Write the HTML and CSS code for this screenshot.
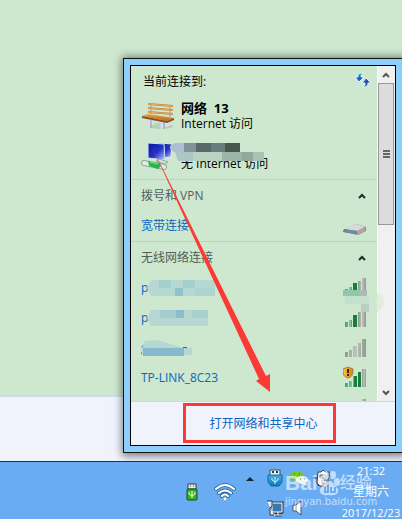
FILE: index.html
```html
<!DOCTYPE html>
<html lang="zh-CN">
<head>
<meta charset="utf-8">
<title>网络连接</title>
<link rel="stylesheet" href="styles.css">
</head>
<body>
<svg class="defs" aria-hidden="true">
  <defs>
    <linearGradient id="gn" x1="0" x2="1"><stop offset="0" stop-color="#4c9c68"/><stop offset=".5" stop-color="#8cc9a0"/><stop offset=".6" stop-color="#187c3c"/></linearGradient>
    <linearGradient id="gy" x1="0" x2="1"><stop offset="0" stop-color="#8e958f"/><stop offset=".5" stop-color="#bcc5bd"/><stop offset="1" stop-color="#929992"/></linearGradient>
    <linearGradient id="scr" x1="0" x2="1" y2="1"><stop offset="0" stop-color="#0715a2"/><stop offset=".55" stop-color="#2035c8"/><stop offset="1" stop-color="#b8ccff"/></linearGradient>
    <linearGradient id="wood" x2="0" y2="1"><stop offset="0" stop-color="#e9a34c"/><stop offset="1" stop-color="#b8691f"/></linearGradient>
    <linearGradient id="usb" x2="0" y2="1"><stop offset="0" stop-color="#48aee0"/><stop offset="1" stop-color="#0876ba"/></linearGradient>
    <linearGradient id="gold" x1="0" x2="1"><stop offset="0" stop-color="#ffc238"/><stop offset="1" stop-color="#e07c08"/></linearGradient>
  </defs>
</svg>
<main class="desktop">
  <div class="window-body"></div>
  <div class="window-footer"></div>
  <section class="flyout">
    <div class="scroll-area">
      <div class="list">
        <section class="group current">
          <header class="group-head"><h1>当前连接到:</h1>
            <button class="icon-button" aria-label="刷新"><svg width="16" height="16" viewBox="0 0 16 16"><path d="M8 1C4 1 3 3 3 5H0l4 5 5-5H6c0-2 0-3 2-4z" fill="#1667b8" stroke="#e4f4fb"/><path d="M8 15c4 0 5-2 5-4h3l-5-5-4 5h3c0 2 0 3-2 4z" fill="#2357a8" stroke="#e4f4fb"/><path d="m6 2-1 3" stroke="#32b8e8"/></svg></button>
          </header>
          <div class="network">
            <svg width="34" height="30" viewBox="0 0 34 30"><ellipse cx="20" cy="25" rx="12" ry="3" fill="#9fb7a5" opacity=".5"/><path d="M8 18v10M12 19v5M21 20v9M25 20v6M28 18v7" stroke="#d9dcea" stroke-width="3"/><path d="M10 19v8M23 20v8" stroke="#98a0ae"/><path d="M10 4v9M29 6v10" stroke="#b9bfcb" stroke-width="2"/><g stroke="#c87a30" stroke-width="2"><path d="m7 3 25 2M7 7l25 2M7 11l25 2"/></g><g stroke="#eab06a"><path d="m7 3 25 2M7 7l25 2M7 11l25 2"/></g><path d="m1 15 6-2 26 4-7 3z" fill="url(#wood)"/><path d="m1 15 25 5v2L1 17zm25 5 7-3v2l-7 3z" fill="#8c4f18"/></svg>
            <div><strong>网络 &nbsp;13</strong><span>Internet 访问</span></div>
          </div>
          <div class="network second">
            <svg width="34" height="30" viewBox="0 0 34 30"><path d="m18 2 13 1-1 13-12 1z" fill="url(#scr)" stroke="#e0e8f2"/><path d="m7 2 16 1 1 16-17-2z" fill="url(#scr)" stroke="#d7e3f2"/><path d="m18 18 9 3-3 2-9-3z" fill="#dae5e5" stroke="#8fa89a"/><path d="m3 22 20 4" stroke="#8fa89a" stroke-width="6" stroke-linecap="round"/><path d="m3 22 20 4" stroke="#dfece4" stroke-width="4" stroke-linecap="round"/><path d="m7 20 11 2 2 3-3 3-9-3z" fill="#28b54a"/><path d="m9 21 8 2" stroke="#8bed96"/></svg>
            <div><strong>&nbsp;</strong><span>无 Internet 访问</span></div>
            <svg class="blur-network" width="94" height="20" viewBox="0 0 94 20"><path d="M0 4 5 1h9v9H4L0 7z" fill="#aebfd5"/><path d="M14 1h12v9H14z" fill="#7e9298"/><path d="M26 1h15v9H26z" fill="#586869"/><path d="M41 1h14v9H41z" fill="#657e7b"/><path d="M55 1h15v9H55z" fill="#485850"/><path d="M5 10h18v9H8z" fill="#abc6c4"/><path d="M23 10h29v9H23z" fill="#b8d3c1"/><path d="M52 10h20v9H52z" fill="#9bb6a8"/><path d="M72 10h11v9H72z" fill="#8fa99d"/><path d="M83 10h11v9H83z" fill="#a9c3b0"/></svg>
          </div>
        </section>
        <section class="group">
          <header class="group-head"><h2>拨号和 VPN</h2><button class="icon-button" aria-label="折叠"><svg width="10" height="8" viewBox="0 0 10 8"><path d="m2 6 3-3 3 3" fill="none" stroke="#20282b" stroke-width="2"/></svg></button></header>
          <a class="entry dial" href="#"><span>宽带连接</span><svg width="24" height="14" viewBox="0 0 24 14"><path d="m0 7 13-6 10 3v4l-8 4-15-3z" fill="#858a8a"/><path d="m1 6 12-5 9 3-8 4z" fill="#d7dad8"/><path d="m1 6 13 2v3L1 9z" fill="#777f82"/><path d="m4 7 8 1v2L4 9z" fill="#4d9dc2"/><path d="m14 8 8-4v4l-8 4z" fill="#b0a6a5"/></svg></a>
        </section>
        <section class="group wireless">
          <header class="group-head"><h2>无线网络连接</h2><button class="icon-button" aria-label="折叠"><svg width="10" height="8" viewBox="0 0 10 8"><path d="m2 6 3-3 3 3" fill="none" stroke="#20282b" stroke-width="2"/></svg></button></header>
          <a class="entry" href="#"><span>p</span>
            <svg class="blur-name" width="72" height="18" viewBox="0 0 72 18"><path d="M4 1h64v16H4L0 9z" fill="#b5d8d2"/><path d="M12 1h12v8H12zm24 0h12v8H36z" fill="#a4cfcf"/><path d="M28 9h8v8h-8z" fill="#91c1cc"/><path d="M48 9h20v8H48z" fill="#add4cf"/></svg>
            <svg width="24" height="20" viewBox="0 0 24 20"><path d="M2 11h3v4H2zm4-2h3v6H6zm4-4h4v10h-4z" fill="url(#gn)"/><path d="M15 3h3v13h-3zm4-3h4v17h-4z" fill="url(#gy)"/><path d="M0 12h16v6H0z" fill="#8dc8a9"/><path d="M16 12h8v6h-8z" fill="#afbbb2"/></svg></a>
          <a class="entry" href="#"><span>p</span>
            <svg class="blur-name" width="72" height="18" viewBox="0 0 72 18"><path d="M4 1h57v16H4L0 9z" fill="#b5d8d2"/><path d="M13 1h16v8H13z" fill="#a3cdd0"/><path d="M29 1h8v8h-8z" fill="#8bbdcb"/><path d="M45 1h16v8H45z" fill="#a8d0ce"/></svg>
            <svg width="24" height="20" viewBox="0 0 24 20"><path d="M2 14h3v5H2zm4-2h3v7H6zm4-5h4v12h-4z" fill="url(#gn)"/><path d="M15 4h3v15h-3zm4 0h4v15h-4z" fill="url(#gy)"/></svg></a>
          <a class="entry" href="#" aria-label="无线网络"><span>g</span>
            <svg class="blur-short" width="51" height="18" viewBox="0 0 51 18"><path d="M0 9 3 2l12-1 13 4 14 4h8v7H0z" fill="#b5d8d2"/><path d="M1 9h41v8H1z" fill="#87b9cc"/><path d="M41 8h4v1h-4z" fill="#1168b4"/></svg>
            <svg width="24" height="20" viewBox="0 0 24 20"><path d="M2 14h3v5H2zm4-2h3v7H6zm4-4h4v11h-4zm5-3h3v14h-3zm4-4h4v18h-4z" fill="url(#gy)"/></svg></a>
          <a class="entry" href="#"><span>TP-LINK_8C23</span>
            <svg width="24" height="24" viewBox="0 0 24 24"><path d="M2 17h3v4H2zm4-2h3v6H6zm4-5h4v11h-4zm5-4h3v15h-3z" fill="url(#gn)"/><path d="M19 3h4v18h-4z" fill="url(#gy)"/><path d="m5 1 5 2c0 6-1 8-5 9-4-1-5-3-5-9z" fill="url(#gold)" stroke="#978753"/><path d="M5 3v4m0 1v2" stroke="#352814" stroke-width="2"/></svg></a>
          <div class="entry clipped"><svg width="24" height="20" viewBox="0 0 24 20"><path d="M15 4h3v14h-3zm4-3h4v17h-4z" fill="url(#gy)"/></svg></div>
        </section>
      </div>
      <div class="scrollbar">
        <button aria-label="向上滚动"><svg width="10" height="8" viewBox="0 0 10 8"><path d="m2 6 3-3 3 3" fill="none" stroke="#555" stroke-width="2"/></svg></button>
        <div class="thumb"><i></i><i></i><i></i></div>
        <div class="track"></div>
        <button aria-label="向下滚动"><svg width="10" height="8" viewBox="0 0 10 8"><path d="m2 2 3 3 3-3" fill="none" stroke="#555" stroke-width="2"/></svg></button>
      </div>
    </div>
    <footer class="flyout-footer"><a href="#">打开网络和共享中心</a></footer>
    <svg class="pixel-patch" width="42" height="20" viewBox="0 0 42 20"><path d="M0 4h24v8H0z" fill="#c4dfcb"/><path d="M16 12h8v8h-8z" fill="#bbcfc1"/><path d="M32 0q7 4 7 10t-7 10z" fill="#e2ede0"/></svg>
  </section>
  <svg class="arrow" width="124" height="252" viewBox="0 0 124 252"><path d="m0 0 115 231 4-2v18l-14-11 3-2z" fill="#fc3a35"/></svg>
</main>
<footer class="taskbar">
  <div class="pinned">
    <svg width="12" height="18" viewBox="0 0 12 18"><path d="M2 1h8v5H2z" fill="#eee" stroke="#344037"/><path d="M4 3h1m2 0h1" stroke="#333"/><rect x="1" y="6" width="10" height="11" rx="1" fill="#34b51b" stroke="#17482a"/><path d="M6 8v7M3 9v2l3 2 3-2V9" fill="none" stroke="#fff"/></svg>
    <svg width="22" height="20" viewBox="0 0 22 20"><g fill="none" stroke-linecap="round"><path d="M2 7q9-8 18 0M5 11q6-5 12 0M8 14q3-3 6 0" stroke="#356fa9" stroke-width="4"/><path d="M2 7q9-8 18 0M5 11q6-5 12 0M8 14q3-3 6 0" stroke="#fff" stroke-width="2"/></g><circle cx="11" cy="17" r="2" fill="#fff" stroke="#739fc9"/></svg>
  </div>
  <button class="more" aria-label="显示隐藏的图标"><svg width="8" height="5" viewBox="0 0 8 5"><path d="m0 5 4-4 4 4z" fill="#17202b"/></svg></button>
  <div class="tray">
    <svg width="16" height="18" viewBox="0 0 16 18"><path d="M3 1h10v6H3z" fill="#eee" stroke="#37576a"/><path d="M5 3h2m2 0h2" stroke="#283d4c" stroke-width="2"/><path d="M1 6h14v7l-3 4H4l-3-4z" fill="url(#usb)" stroke="#1768a0"/><path d="M8 8v7M5 9v2l3 2 3-2V9" fill="none" stroke="#d5f3ff"/></svg>
    <svg width="18" height="16" viewBox="0 0 18 16"><ellipse cx="7" cy="6" rx="7" ry="5" fill="#70ca2d"/><path d="m3 9-1 4 4-2z" fill="#70ca2d"/><ellipse cx="12" cy="10" rx="6" ry="4" fill="#edf3ed"/><path d="m14 12 2 3-4-1z" fill="#edf3ed"/><path d="M4 4h1m4 0h1M10 9h1m3 0h1" stroke="#466457"/></svg>
    <svg width="18" height="18" viewBox="0 0 18 18"><path d="M4 3h3l2-2 2 2h3v14H6l-3-3z" fill="#f3f5f7" stroke="#40464c"/><path d="M6 6h6v3H6zm2 5h5v4H8z" fill="#d2dce5" stroke="#5f6870"/><path d="M12 3h3v4h2M2 8v5l3 4" fill="none" stroke="#303942"/></svg>
    <svg width="18" height="18" viewBox="0 0 18 18"><path d="M6 4h10v9H6zM9 16h7m-4-3v3" fill="#3d7aae" stroke="#26394b" stroke-width="3"/><path d="M6 4h10v9H6zM8 16h8m-4-3v3" fill="#3a78ad" stroke="#fff"/><path d="M1 2h5v5l-2 2v7h4" fill="#e9f2fa" stroke="#24394d"/></svg>
    <svg width="14" height="16" viewBox="0 0 14 16"><path d="M1 5h3l5-4v14l-5-4H1z" fill="#fff" stroke="#41536a"/><path d="M4 5v6" stroke="#8799ac"/></svg>
  </div>
  <time class="clock" datetime="2017-12-23T21:32"><span>21:32</span><span class="weekday">星期六</span><span>2017/12/23</span></time>
  <div class="watermark"><div class="brand"><b>Bai</b><svg width="22" height="26" viewBox="0 0 22 26" fill="#fff"><ellipse cx="3" cy="11" rx="3" ry="4"/><ellipse cx="8" cy="5" rx="3" ry="4"/><ellipse cx="15" cy="5" rx="3" ry="4"/><ellipse cx="19" cy="12" rx="3" ry="4"/><path d="M11 11c4 0 6 5 9 8 1 5-3 7-9 6-6 1-10-1-9-6 3-3 5-8 9-8z"/><path d="M7 17v5h3v-7m3 2v5h4v-5" fill="none" stroke="#6aacf4" stroke-width="2"/></svg><b>经验</b></div><div class="address">jingyan.baidu.com</div></div>
</footer>
</body>
</html>
```
FILE: styles.css
```css
* { box-sizing: border-box; }

body {
  margin: 0;
  height: 100vh;
  display: flex;
  flex-direction: column;
  overflow: hidden;
  font: 12px/16px "Open Sans", "Noto Sans CJK SC", sans-serif;
  color: #000;
}

a { color: #0b66bd; text-decoration: none; }
button { border: 0; padding: 0; background: none; }
svg { display: block; flex: none; }
.defs { position: absolute; width: 0; height: 0; }

.desktop {
  position: relative;
  flex: 1;
  display: flex;
  flex-direction: column;
  min-height: 0;
}
.window-body { flex: 1; background: #cde8cf; }
.window-footer { height: 66px; background: #f0f3fc; border-top: 2px solid #cddbea; }

.flyout {
  position: absolute;
  top: 58px;
  right: -1px;
  bottom: 8px;
  left: 123px;
  display: flex;
  flex-direction: column;
  padding: 7px;
  border: 1px solid #111;
  outline: 6px solid #8ccfff;
  outline-offset: -7px;
  background: #000;
  box-shadow: 1px 1px 8px 2px rgb(0 0 0 / 50%);
}
.scroll-area { flex: 1; min-height: 0; display: flex; background: #cde8cf; }
.list { flex: 1; min-width: 0; overflow: hidden; border-right: 1px solid #f8fbf8; }
.group { padding: 0 10px; border-bottom: 1px solid #c8c9cc; }
.wireless { border: 0; }
.current { height: 114px; padding: 2px 6px 0 10px; }
.group-head { display: flex; align-items: center; justify-content: space-between; height: 31px; }
h1, h2 { margin: 0; font-size: 12px; font-weight: 400; }
h2 { color: #555e58; }
.current .group-head { padding-left: 2px; height: 28px; }
.current .icon-button { padding-bottom: 4px; }
.icon-button { display: block; }

.network { position: relative; display: flex; gap: 6px; height: 40px; align-items: center; }
.network strong, .network span { display: block; line-height: 15px; }
.network strong { font-size: 13px; }
.blur-network { position: absolute; left: 29px; top: 6px; }

.entry { position: relative; display: flex; align-items: center; justify-content: space-between; height: 30px; }
.dial svg { margin-top: 8px; }
.blur-name, .blur-short { position: absolute; left: 6px; top: 6px; }
.blur-short { left: 1px; }
.entry > svg:last-child { margin-left: auto; }
.clipped { align-items: flex-start; padding-top: 5px; }

.scrollbar { width: 17px; display: flex; flex-direction: column; padding-right: 1px; background: #f0f0f0; }
.scrollbar button { height: 17px; display: grid; place-items: center; }
.thumb {
  flex: 142;
  border: 1px solid #999;
  background: #dcdcdc;
  display: flex;
  flex-direction: column;
  align-items: center;
  justify-content: center;
  gap: 1px;
}
.thumb i { width: 7px; height: 2px; background: #666; }
.track { flex: 161; }

.flyout-footer {
  height: 44px;
  padding: 1px 59px 2px 52px;
  display: flex;
  background: #f0f3fc;
  border-top: 1px solid #c8d6ea;
}
.flyout-footer a { flex: 1; display: grid; place-items: center; padding: 2px 0 0 8px; border: 3px solid #fc3a35; }
.pixel-patch { position: absolute; left: 221px; top: 233px; }
.arrow { position: absolute; left: 151px; top: 145px; pointer-events: none; }

.taskbar {
  position: relative;
  height: 58px;
  display: flex;
  justify-content: flex-end;
  overflow: hidden;
  background: #6aacf4;
  border-top: 1px solid #28313b;
}
.pinned { display: flex; align-items: center; gap: 16px; height: 60px; padding-right: 10px; }
.more { height: 32px; padding-right: 9px; }
.tray {
  display: grid;
  grid-template-columns: repeat(3, 24px);
  grid-auto-rows: 30px;
  place-items: center;
  padding-top: 1px;
  margin-right: 6px;
}
.clock { display: flex; flex-direction: column; gap: 3px; width: 61px; padding-right: 1px; text-align: center; color: #fff; font-size: 11px; line-height: 18px; }
.weekday { font-size: 12px; }
.watermark { position: absolute; top: 8px; right: 27px; width: 90px; color: #fff; opacity: .6; pointer-events: none; }
.brand { display: flex; align-items: center; height: 26px; }
.brand b { font: 700 21px/26px "Liberation Sans", "Noto Sans CJK SC", sans-serif; }
.brand b:last-child { font-size: 16px; font-weight: 500; }
.address { font: 10px/12px "DejaVu Sans", sans-serif; }
```
